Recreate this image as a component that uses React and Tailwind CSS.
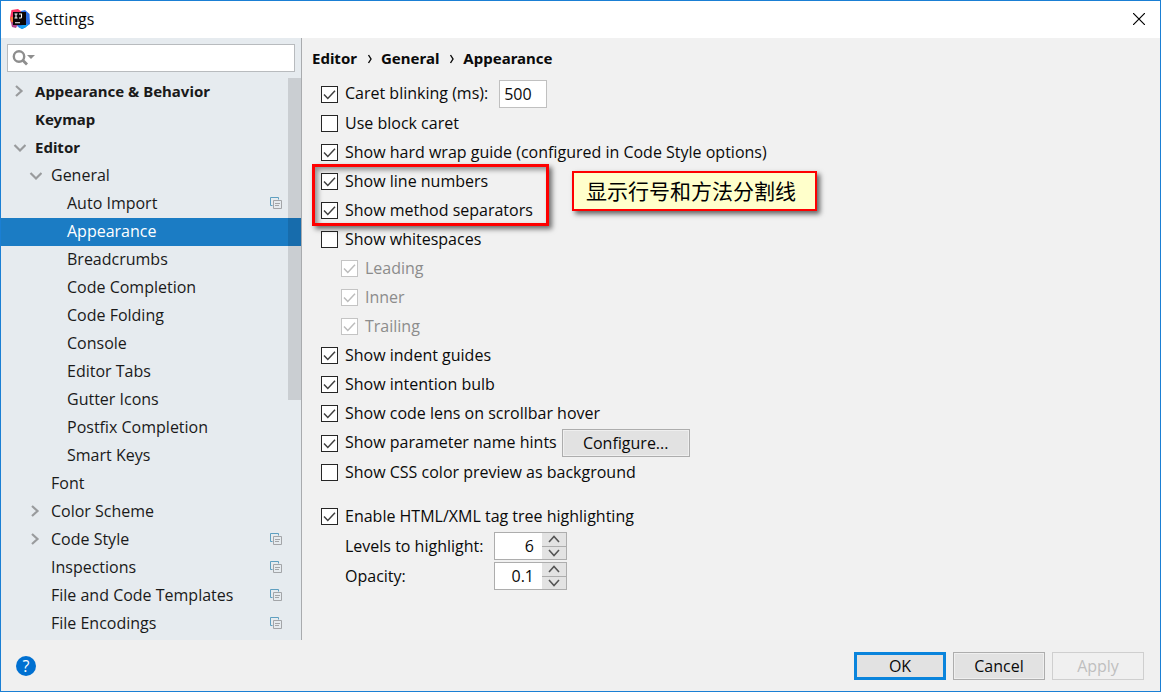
import React, { useState } from "react";

const tree = [
  { label: "Appearance & Behavior", level: 0, arrow: "right" },
  { label: "Keymap", level: 0 },
  { label: "Editor", level: 0, arrow: "down" },
  { label: "General", level: 1, arrow: "down" },
  { label: "Auto Import", level: 2, project: true },
  { label: "Appearance", level: 2 },
  { label: "Breadcrumbs", level: 2 },
  { label: "Code Completion", level: 2 },
  { label: "Code Folding", level: 2 },
  { label: "Console", level: 2 },
  { label: "Editor Tabs", level: 2 },
  { label: "Gutter Icons", level: 2 },
  { label: "Postfix Completion", level: 2 },
  { label: "Smart Keys", level: 2 },
  { label: "Font", level: 1 },
  { label: "Color Scheme", level: 1, arrow: "right" },
  { label: "Code Style", level: 1, arrow: "right", project: true },
  { label: "Inspections", level: 1, project: true },
  { label: "File and Code Templates", level: 1, project: true },
  { label: "File Encodings", level: 1, project: true },
];

const indents = ["pl-[11px]", "pl-[27px]", "pl-[43px]"];

function AppIcon() {
  return (
    <svg width="20" height="20" viewBox="0 0 20 20" aria-hidden="true">
      <path d="M1.500 1 8 0l4 3-3 9-8 1.5L0 9z" fill="#fe3565" />
      <path d="M0 9.5 4 8l4 7-2 4-4-1z" fill="#b1458f" />
      <path d="M0 8 3 8v5l-1.500 .5z" fill="#f97a3a" />
      <path d="m11 2 4-1 4.500 4L20 15l-5 3.500-3 1.500-5-3z" fill="#2b6fe6" />
      <path d="m13 16 6-1-3.500 3.500L12 20l-4-2z" fill="#16a0f2" />
      <path d="M3 3h13v13H3z" fill="#0b0608" />
      <path d="M4.500 5h3M6 5v4M4.500 9h3M9 5h2.500v3q0 1-1 1H9M5 13.800h5" fill="none" stroke="#fff" strokeWidth="1.100" />
    </svg>
  );
}

function Arrow({ dir }) {
  return (
    <svg width="14" height="14" viewBox="0 0 14 14" fill="none" stroke="#999b9d" strokeWidth="2.200" aria-hidden="true">
      {dir === "right" && <path d="m4 2 5.500 5L4 12" />}
      {dir === "down" && <path d="m2.500 5 5.500 5.500L13.500 5" />}
    </svg>
  );
}

function ProjectIcon() {
  return (
    <svg width="12" height="12" viewBox="0 0 12 12" fill="none" aria-hidden="true">
      <path d="M2.500 8.500h-2v-8h8v2" stroke="#5f9fc0" />
      <path d="M3.500 3.500h8v8h-8z" stroke="#a3a5a8" />
      <path d="M5 6.500h5M5 8.500h4" stroke="#a3a5a8" />
    </svg>
  );
}

function Separator() {
  return (
    <svg width="24" height="20" viewBox="0 0 24 20" fill="none" stroke="#0a0a0a" strokeWidth="1.400" aria-hidden="true">
      <path d="m11.500 7 2.500 4-2.500 4" />
    </svg>
  );
}

function TreeRow({ item, selected, onSelect }) {
  return (
    <li>
      <button
        type="button"
        onClick={onSelect}
        className={`flex h-7 w-full items-center pb-0.5 text-left ${indents[item.level]} ${
          selected ? "bg-[#1b7cc4] text-white" : "text-[#1a1a1a]"
        } ${item.level === 0 ? "font-['Noto_Sans',sans-serif] text-[15px] font-bold" : ""}`}
      >
        <span className="mr-[9px] w-3.5 shrink-0">
          <Arrow dir={item.arrow} />
        </span>
        <span className="flex-1">{item.label}</span>
        {item.project && (
          <span className="mr-[19px]">
            <ProjectIcon />
          </span>
        )}
      </button>
    </li>
  );
}

function Check({ label, checked = false, disabled = false, tall = false, children }) {
  return (
    <div className={`flex items-center ${tall ? "h-[30px]" : "h-[29px]"} ${disabled ? "pl-5" : ""}`}>
      <label className={`flex items-center gap-[7px] ${disabled ? "text-[#8c8c8c]" : ""}`}>
        <span className="grid size-[17px] shrink-0">
          <input
            type="checkbox"
            defaultChecked={checked}
            disabled={disabled}
            className="peer col-start-1 row-start-1 size-[17px] appearance-none border border-[#262626] bg-white disabled:border-[#c4c4c4]"
          />
          <svg
            viewBox="0 0 17 17"
            className="pointer-events-none invisible col-start-1 row-start-1 size-[17px] text-[#404040] peer-checked:visible peer-disabled:text-[#bcbcbc]"
            fill="none"
            stroke="currentColor"
            strokeWidth="1.500"
            aria-hidden="true"
          >
            <path d="m3 8.500 3.800 4L14 4.800" />
          </svg>
        </span>
        <span className="pb-0.5">{label}</span>
      </label>
      {children}
    </div>
  );
}

function Spinner({ id, label, initial, step, digits }) {
  const [value, setValue] = useState(initial);
  const change = (d) => setValue((Number(value) + d).toFixed(digits));
  const arrowButton = "grid flex-1 place-items-center bg-[#e3e3e3]";
  return (
    <div className="flex h-7 items-center pl-6">
      <label htmlFor={id} className="w-[149px]">
        {label}
      </label>
      <div className="flex h-7 border border-[#adadad] bg-white">
        <input
          id={id}
          type="text"
          inputMode="decimal"
          value={value}
          onChange={(e) => setValue(e.target.value)}
          className="w-[47px] bg-white pr-2 text-right outline-none"
        />
        <div className="flex w-6 flex-col">
          <button type="button" aria-label={`Increase ${label}`} className={arrowButton} onClick={() => change(step)}>
            <svg width="12" height="8" viewBox="0 0 12 8" fill="none" stroke="#555" strokeWidth="1.600">
              <path d="m1 7 5-5.500L11 7" />
            </svg>
          </button>
          <button
            type="button"
            aria-label={`Decrease ${label}`}
            className={`${arrowButton} border-t border-[#adadad]`}
            onClick={() => change(-step)}
          >
            <svg width="12" height="8" viewBox="0 0 12 8" fill="none" stroke="#555" strokeWidth="1.600">
              <path d="m1 1 5 5.500L11 1" />
            </svg>
          </button>
        </div>
      </div>
    </div>
  );
}

export default function App() {
  const [selected, setSelected] = useState(5);
  return (
    <div className="flex min-h-screen flex-col border border-[#1a7fd4] bg-[#f0f0f0] font-['Open_Sans','Noto_Sans_CJK_SC',sans-serif] text-base leading-5 text-[#0a0a0a]">
      <header className="flex h-[37px] items-center bg-white pr-[15px] pb-px pl-[9px]">
        <AppIcon />
        <h1 className="ml-[5px] flex-1">Settings</h1>
        <button type="button" aria-label="Close">
          <svg width="12" height="12" viewBox="0 0 12 12" stroke="#000" strokeWidth="1.200">
            <path d="m0 0 12 12M12 0 0 12" />
          </svg>
        </button>
      </header>

      <div className="flex flex-1">
        <aside className="w-[301px] shrink-0 border-r border-[#a9abae] bg-[#e6ebef]">
          <div className="px-1.5 py-1.5">
            <label className="flex h-7 items-center border border-[#b8bbbe] bg-white pl-1">
              <svg width="24" height="18" viewBox="0 0 24 18" aria-hidden="true">
                <circle cx="7" cy="7.500" r="5.200" fill="none" stroke="#8e8e8e" strokeWidth="2.400" />
                <path d="m10.500 11 4.500 4.500" stroke="#8e8e8e" strokeWidth="2.800" />
                <path d="M15 6h8l-4 4z" fill="#8e8e8e" />
              </svg>
              <input type="search" aria-label="Search settings" className="min-w-0 flex-1 bg-white outline-none" />
            </label>
          </div>
          <div className="relative">
            <ul>
              {tree.map((item, i) => (
                <TreeRow key={item.label} item={item} selected={i === selected} onSelect={() => setSelected(i)} />
              ))}
            </ul>
            <div className="pointer-events-none absolute top-0 right-0 h-[322px] w-[13px] bg-black/12" />
          </div>
        </aside>

        <main className="flex-1 bg-[#f1f1f1] pl-[19px]">
          <nav
            aria-label="Breadcrumb"
            className="-ml-[9px] flex h-[41px] items-center pb-0.5 font-['Noto_Sans',sans-serif] text-[15px] font-bold"
          >
            <span>Editor</span>
            <Separator />
            <span>General</span>
            <Separator />
            <span>Appearance</span>
          </nav>

          <Check label="Caret blinking (ms):" checked tall>
            <input
              type="text"
              aria-label="Caret blinking interval"
              defaultValue="500"
              className="ml-[11px] h-7 w-12 border border-[#c0c0c0] bg-white pl-1 outline-none"
            />
          </Check>
          <Check label="Use block caret" />
          <Check label="Show hard wrap guide (configured in Code Style options)" checked />
          <div className="relative">
            <Check label="Show line numbers" checked />
            <Check label="Show method separators" checked />
            <div className="pointer-events-none absolute -top-[3px] -bottom-px -left-[9px] w-[237px] border-[3px] border-[#fe0000] shadow-[3px_3px_5px_rgba(0,0,0,0.55),inset_3px_3px_5px_rgba(0,0,0,0.4)]" />
            <p className="absolute top-1 left-[251px] flex h-10 w-[245px] items-center border-2 border-[#fe0000] bg-[#ffffcb] pl-3 text-[21px] whitespace-nowrap text-black shadow-[3px_3px_5px_rgba(0,0,0,0.6)]">
              显示行号和方法分割线
            </p>
          </div>
          <Check label="Show whitespaces" />
          <Check label="Leading" checked disabled />
          <Check label="Inner" checked disabled />
          <Check label="Trailing" checked disabled />
          <Check label="Show indent guides" checked />
          <Check label="Show intention bulb" checked />
          <Check label="Show code lens on scrollbar hover" checked />
          <Check label="Show parameter name hints" checked tall>
            <button
              type="button"
              className="ml-[5px] h-7 w-32 border border-[#adadad] bg-[#e2e2e2] pb-px shadow-[inset_0_0_0_1px_#efefef]"
            >
              Configure...
            </button>
          </Check>
          <Check label="Show CSS color preview as background" />

          <div className="mt-[15px]">
            <Check label="Enable HTML/XML tag tree highlighting" checked />
            <div className="mt-px flex flex-col gap-0.5">
              <Spinner id="levels" label="Levels to highlight:" initial="6" step={1} digits={0} />
              <Spinner id="opacity" label="Opacity:" initial="0.1" step={0.1} digits={1} />
            </div>
          </div>
        </main>
      </div>

      <footer className="flex h-[51px] items-center gap-[7px] pr-4 pl-[15px]">
        <button
          type="button"
          aria-label="Help"
          className="mr-auto grid size-5 place-items-center rounded-full bg-[#0070d1] text-white"
        >
          ?
        </button>
        <button type="button" className="h-7 w-[92px] border-3 border-[#0a84dc] bg-[#e2e2e2]">
          OK
        </button>
        <button
          type="button"
          className="h-7 w-[92px] border border-[#adadad] bg-[#e2e2e2] shadow-[inset_0_0_0_1px_#efefef]"
        >
          Cancel
        </button>
        <button type="button" disabled className="h-7 w-[92px] border border-[#cfcfcf] text-[#bfbfbf]">
          Apply
        </button>
      </footer>
    </div>
  );
}
